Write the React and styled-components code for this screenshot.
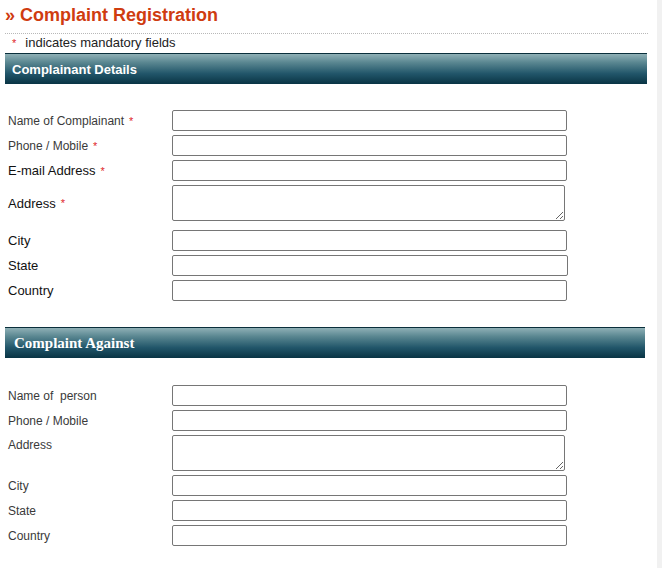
import React from "react";
import styled, { createGlobalStyle } from "styled-components";

const Global = createGlobalStyle`
  html {
    background: linear-gradient(to right, #ffffff 657px, #f1f1f1 657px);
  }
  body {
    margin: 0;
    font-family: "Liberation Sans", Arial, sans-serif;
    color: #333;
  }
`;

const Page = styled.div`
  width: 642px;
  padding: 4px 0 20px 5px;
`;

const Title = styled.h1`
  margin: 0;
  padding: 0 0 7px 0;
  font-size: 18px;
  line-height: 22px;
  font-weight: bold;
  color: #cf3c10;
  border-bottom: 1px dotted #b8b8b8;
  width: 643px;
`;

const Note = styled.div`
  font-size: 13px;
  line-height: 15px;
  color: #222;
  padding: 1px 0 2px 7px;
`;

const Star = styled.span`
  color: #e0262b;
  margin-left: 5px;
  font-size: 11px;
`;

const NoteStar = styled(Star)`
  margin: 0 9px 0 0;
`;

const SectionBar = styled.div`
  width: ${(p) => p.$w}px;
  height: 31px;
  border-top: 1px solid #0a2f3b;
  background: linear-gradient(
    to bottom,
    #8fb0b6 0%,
    #5a8791 28%,
    #22566a 65%,
    #093444 100%
  );
  display: flex;
  align-items: center;
  padding-left: ${(p) => (p.$serif ? 9 : 7)}px;
  box-sizing: border-box;
  color: #fff;
  font-weight: bold;
  font-family: ${(p) =>
    p.$serif
      ? `"Liberation Serif", "Times New Roman", serif`
      : `"Liberation Sans", Arial, sans-serif`};
  font-size: ${(p) => (p.$serif ? 15 : 13)}px;
`;

const Fields = styled.div`
  display: grid;
  grid-template-columns: 167px 1fr;
  row-gap: 4px;
  padding-top: ${(p) => p.$before}px;
  margin-bottom: ${(p) => p.$after}px;
`;

const Label = styled.div`
  display: flex;
  align-items: ${(p) => (p.$top ? "flex-start" : "center")};
  padding-top: ${(p) => (p.$top ? 3 : 0)}px;
  padding-left: 3px;
  font-size: ${(p) => (p.$big ? 13 : 12)}px;
  color: ${(p) => (p.$big ? "#111" : "#3a3a3a")};
  white-space: pre;
`;

const Input = styled.input`
  box-sizing: border-box;
  width: ${(p) => p.$w || 395}px;
  height: 21px;
  margin: 0;
  border: 1px solid #767676;
  border-radius: 2px;
  background: #fff;
  font-size: 12px;
`;

const Area = styled.textarea`
  box-sizing: border-box;
  width: 393px;
  height: 36px;
  margin: 0;
  border: 1px solid #767676;
  border-radius: 2px;
  background: #fff;
  display: block;
`;

const complainant = [
  { label: "Name of Complainant", req: true },
  { label: "Phone / Mobile", req: true },
  { label: "E-mail Address", req: true, big: true },
  { label: "Address", req: true, big: true, area: true },
  { label: "City", big: true, gap: 5 },
  { label: "State", big: true, w: 396 },
  { label: "Country", big: true },
];

const against = [
  { label: "Name of  person" },
  { label: "Phone / Mobile" },
  { label: "Address", area: true, top: true },
  { label: "City" },
  { label: "State" },
  { label: "Country" },
];

function FieldRows({ rows }) {
  return rows.map((r) => (
    <React.Fragment key={r.label}>
      <Label
        $big={r.big}
        $top={r.top}
        style={r.gap ? { marginTop: r.gap } : undefined}
      >
        {r.label}
        {r.req && <Star>*</Star>}
      </Label>
      <div style={r.gap ? { marginTop: r.gap } : undefined}>
        {r.area ? <Area /> : <Input type="text" $w={r.w} />}
      </div>
    </React.Fragment>
  ));
}

export default function App() {
  return (
    <Page>
      <Global />
      <Title>» Complaint Registration</Title>
      <Note>
        <NoteStar>*</NoteStar>indicates mandatory fields
      </Note>

      <SectionBar $w={642}>Complainant Details</SectionBar>
      <Fields $before={26} $after={26}>
        <FieldRows rows={complainant} />
      </Fields>

      <SectionBar $w={640} $serif>
        Complaint Against
      </SectionBar>
      <Fields $before={27} $after={0}>
        <FieldRows rows={against} />
      </Fields>
    </Page>
  );
}
